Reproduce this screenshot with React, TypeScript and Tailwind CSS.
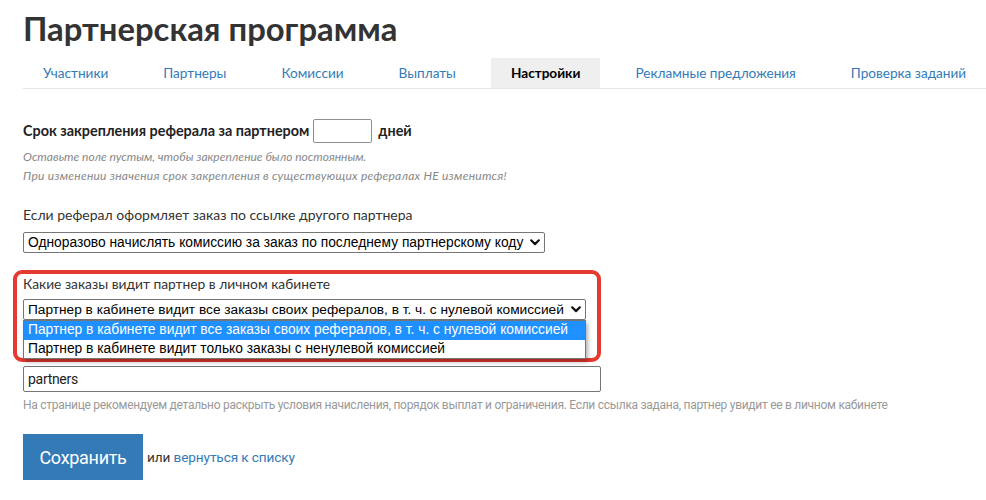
const tabs = [
  'Участники',
  'Партнеры',
  'Комиссии',
  'Выплаты',
  'Настройки',
  'Рекламные предложения',
  'Проверка заданий',
];

const Chevron = () => (
  <svg width="10" height="7" viewBox="0 0 10 7" className="shrink-0">
    <path d="M1.2 1.3 L5 5.1 L8.8 1.3" fill="none" stroke="#111" strokeWidth="2.2" strokeLinecap="round" strokeLinejoin="round" />
  </svg>
);

const FakeSelect = ({ value, width, size }: { value: string; width: string; size: string }) => (
  <div
    className={`${width} ${size} h-[21px] flex items-center justify-between gap-[3px] border border-[#767676] rounded-[2px] bg-white pl-[4px] pr-[4px] font-['Liberation_Sans',Arial,sans-serif] text-black`}
  >
    <span className="whitespace-nowrap leading-none">{value}</span>
    <Chevron />
  </div>
);

const App = () => {
  return (
    <div className="w-[986px] h-[500px] bg-white overflow-hidden relative font-['Lato',sans-serif] text-[#333]">
      <div className="pl-[23px]">
        <h1 className="pt-[9px] text-[32.8px] font-bold leading-[39px] text-[#333]">Партнерская программа</h1>

        <nav className="mt-[10px] flex gap-[15px] border-b border-[#e6e6e6] h-[31px]">
          {tabs.map((tab) => (
            <div
              key={tab}
              className={`px-5 h-[30px] flex items-center text-[13.6px] whitespace-nowrap ${
                tab === 'Настройки' ? 'bg-[#efefef] font-bold text-black' : 'text-[#337ab7]'
              }`}
            >
              {tab}
            </div>
          ))}
        </nav>

        <div className="mt-[30px] flex items-center h-[24px] gap-[4px] text-[14.4px] font-bold text-[#222]">
          <span>Срок закрепления реферала за партнером</span>
          <div className="w-[59px] h-[24px] border border-[#8f8f8f] rounded-[2px] bg-white" />
          <span className="ml-[2px]">дней</span>
        </div>
        <div className="mt-[4px] text-[12px] italic leading-[19px] text-[#888]">
          <p>Оставьте поле пустым, чтобы закрепление было постоянным.</p>
          <p className="tracking-[0.25px]">При изменении значения срок закрепления в существующих рефералах НЕ изменится!</p>
        </div>

        <p className="mt-[20px] text-[14px] leading-[20px] text-[#333]">Если реферал оформляет заказ по ссылке другого партнера</p>
        <div className="mt-[7px]">
          <FakeSelect size="text-[13.8px]" width="w-[522px]" value="Одноразово начислять комиссию за заказ по последнему партнерскому коду" />
        </div>

        <p className="mt-[21px] text-[13.8px] leading-[20px] text-[#333]">Какие заказы видит партнер в личном кабинете</p>
        <div className="mt-[5px] relative">
          <FakeSelect size="text-[13.7px]" width="w-[563px]" value="Партнер в кабинете видит все заказы своих рефералов, в т. ч. с нулевой комиссией" />
          <div className="absolute left-0 top-full z-10 w-[563px] border border-[#767676] bg-white shadow-[2px_3px_4px_rgba(0,0,0,0.3)] font-['Liberation_Sans',Arial,sans-serif] text-[13.8px]">
            <div className="h-[19px] flex items-center px-[4px] bg-[#1e90ff] text-white whitespace-nowrap">
              Партнер в кабинете видит все заказы своих рефералов, в т. ч. с нулевой комиссией
            </div>
            <div className="h-[18px] flex items-center px-[4px] text-black whitespace-nowrap">
              Партнер в кабинете видит только заказы с ненулевой комиссией
            </div>
          </div>
        </div>

        {/* label row hidden under the open dropdown */}
        <div className="mt-[21px] h-[20px]" />
        <div className="mt-[5px] w-[578px] h-[26px] border border-[#767676] rounded-[2px] flex items-center px-[4px] text-[14px] font-['Roboto',sans-serif] tracking-[-0.3px] text-[#222]">
          partners
        </div>
        <p className="mt-[5px] text-[12px] leading-[16px] text-[#999] font-['Roboto',sans-serif] tracking-[-0.28px] whitespace-nowrap">
          На странице рекомендуем детально раскрыть условия начисления, порядок выплат и ограничения. Если ссылка задана, партнер увидит ее в личном кабинете
        </p>

        <div className="mt-[21px] flex items-center gap-[4px]">
          <button className="w-[120px] h-[46px] bg-[#337ab7] text-white text-[18px] font-['Roboto',sans-serif] tracking-[-0.3px]">
            Сохранить
          </button>
          <span className="text-[13.6px] font-['Roboto',sans-serif] tracking-[-0.1px] text-[#333]">
            или <a className="text-[#337ab7]">вернуться к списку</a>
          </span>
        </div>
      </div>

      {/* red annotation frame */}
      <div className="absolute left-[13px] top-[270px] w-[588px] h-[92px] border-[4px] border-[#e53a2f] rounded-[9px] pointer-events-none" />
    </div>
  );
};

export default App;
